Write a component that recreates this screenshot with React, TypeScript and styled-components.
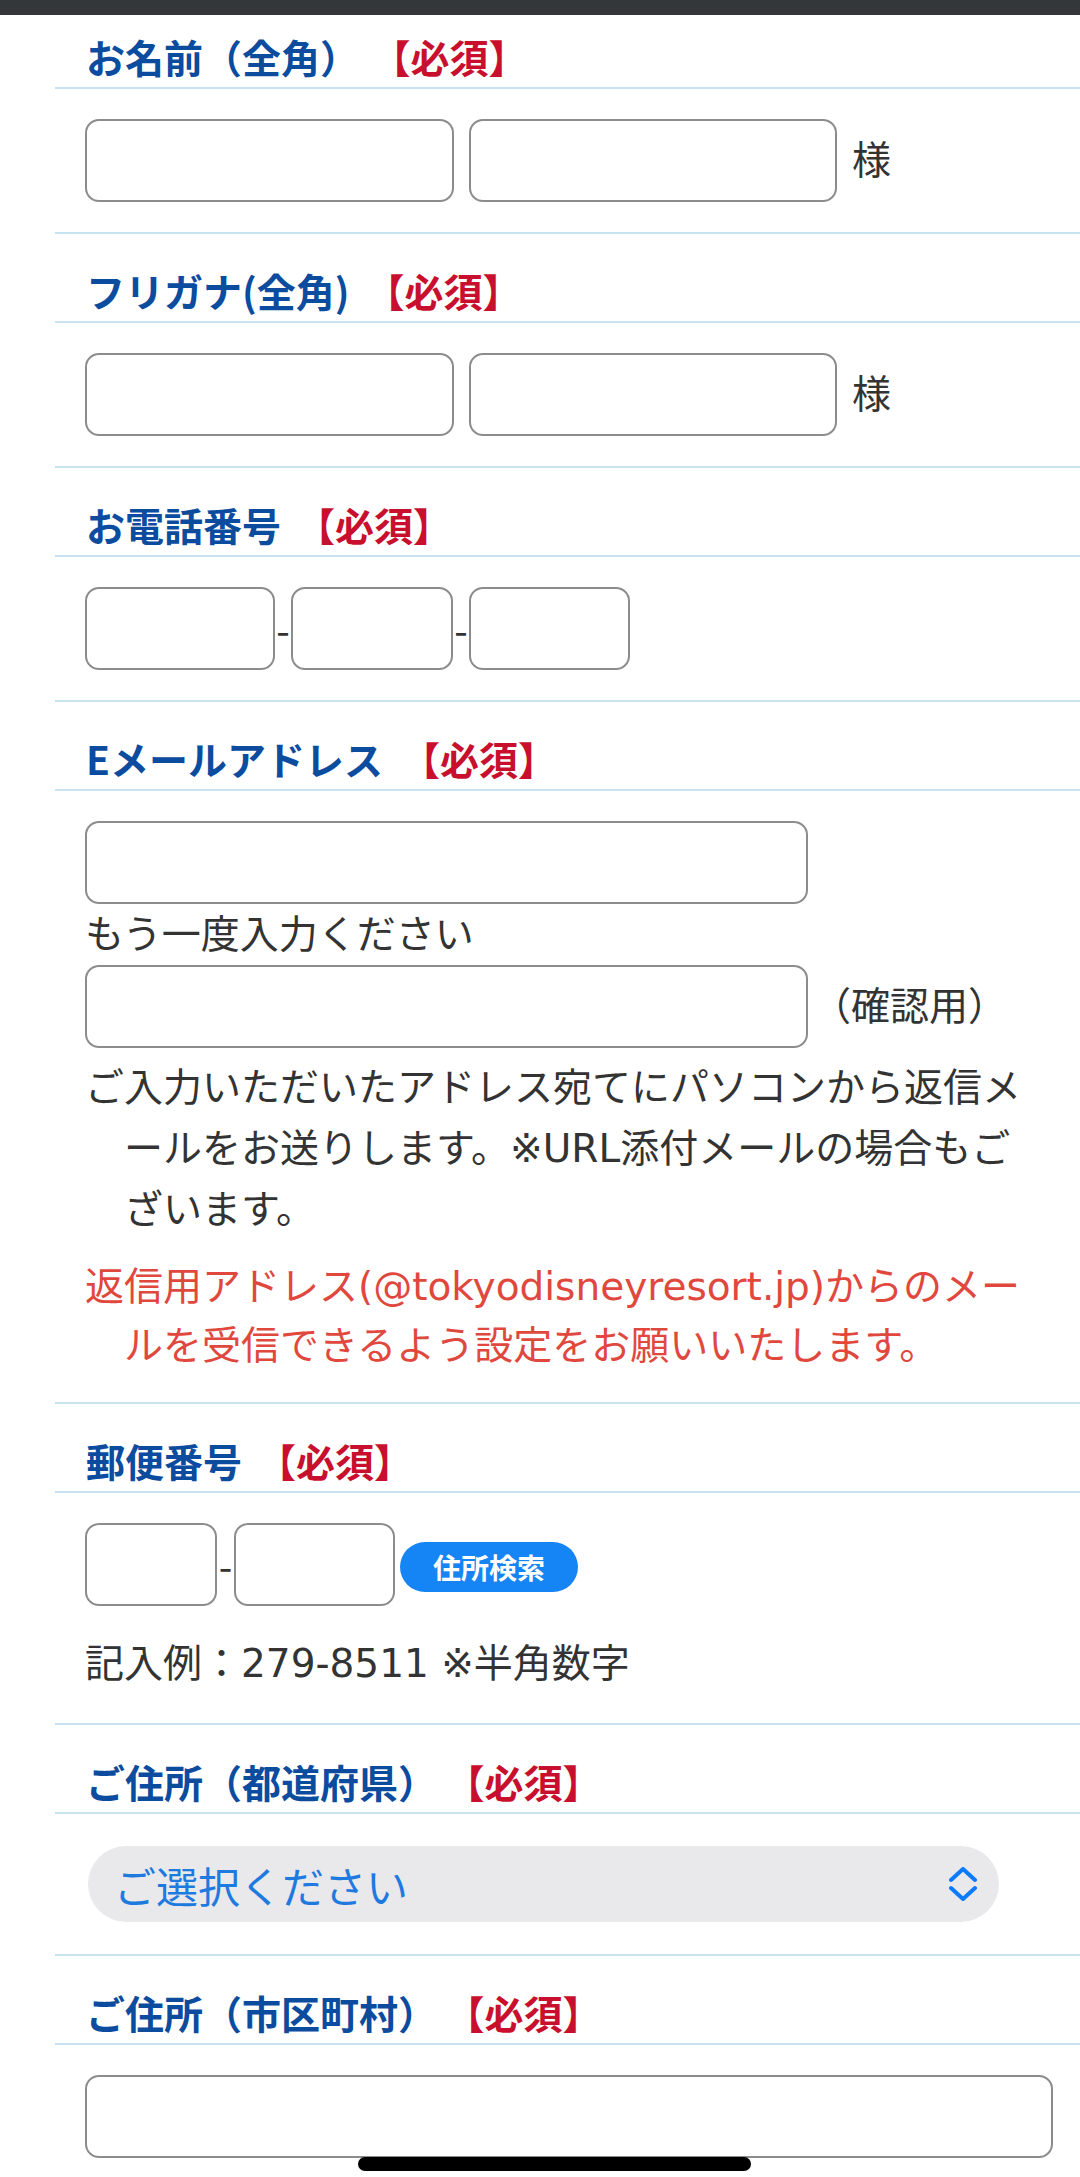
import styled, { createGlobalStyle } from 'styled-components'

const GlobalStyle = createGlobalStyle`
  html, body {
    margin: 0;
    padding: 0;
    background: #fff;
  }
  body {
    font-family: "DejaVu Sans", "Noto Sans CJK JP", sans-serif;
    color: #333;
  }
  * {
    box-sizing: border-box;
  }
`

const LINE = '#c7e3f1'

const TopBar = styled.div`
  position: fixed;
  top: 0;
  left: 0;
  right: 0;
  height: 15px;
  background: #343739;
  z-index: 2;
`

const HomeIndicator = styled.div`
  position: fixed;
  left: 358px;
  bottom: 6px;
  width: 393px;
  height: 14px;
  border-radius: 7px;
  background: #000;
  z-index: 2;
`

const Form = styled.form`
  padding-left: 55px;
  margin: 0;
`

const Field = styled.section`
  border-bottom: 2px solid ${LINE};
`

const FieldTitle = styled.h2`
  margin: 0;
  padding: 33px 0 8px 31px;
  font-family: "Noto Sans CJK JP", sans-serif;
  font-size: 39px;
  line-height: 46px;
  font-weight: 700;
  color: #0b4c9f;
  border-bottom: 2px solid ${LINE};
  white-space: nowrap;
`

const Required = styled.span<{ $gap: number }>`
  color: #c8102e;
  margin-left: ${p => p.$gap}px;
`

const Body = styled.div<{ $pt?: number; $pb?: number }>`
  padding: ${p => p.$pt ?? 30}px 0 ${p => p.$pb ?? 30}px 30px;
`

const Row = styled.div<{ $gap?: number }>`
  display: flex;
  align-items: center;
  gap: ${p => p.$gap ?? 0}px;
`

const TextBox = styled.input<{ $w: number }>`
  width: ${p => p.$w}px;
  height: 83px;
  margin: 0;
  padding: 0 16px;
  border: 2px solid #8c8c8c;
  border-radius: 14px;
  background: #fff;
  font-family: inherit;
  font-size: 39px;
  color: #333;
  outline: none;
  flex: none;
`

const Dash = styled.span<{ $w?: number }>`
  width: ${p => p.$w ?? 16}px;
  text-align: center;
  font-family: "Noto Sans CJK JP", sans-serif;
  font-size: 39px;
  line-height: 1;
  color: #333;
`

const Suffix = styled.span<{ $ml?: number }>`
  margin-left: ${p => p.$ml ?? 0}px;
  font-size: 39px;
  line-height: 1;
  color: #333;
  white-space: nowrap;
`

const Label = styled.div`
  font-size: 39px;
  line-height: 61px;
  color: #333;
`

const Note = styled.p<{ $red?: boolean; $mt: number; $lh: number }>`
  margin: ${p => p.$mt}px 0 0;
  padding-left: 39px;
  text-indent: -39px;
  font-size: 39px;
  line-height: ${p => p.$lh}px;
  color: ${p => (p.$red ? '#e0483e' : '#333')};
  white-space: nowrap;
`

const SearchButton = styled.button`
  margin: 4px 0 0 5px;
  width: 178px;
  height: 50px;
  padding: 0;
  border: none;
  border-radius: 25px;
  background: #1584f5;
  color: #fff;
  font-family: "Noto Sans CJK JP", sans-serif;
  font-size: 28px;
  font-weight: 700;
  line-height: 50px;
`

const Hint = styled.div`
  margin-top: 27px;
  font-size: 39px;
  line-height: 61px;
  color: #333;
`

const SelectBox = styled.button`
  display: flex;
  align-items: center;
  justify-content: space-between;
  margin-left: 3px;
  width: 911px;
  height: 76px;
  padding: 0 21px 0 26px;
  border: none;
  border-radius: 38px;
  background: #e9e9eb;
  color: #1f7ae0;
  font-family: "Noto Sans CJK JP", sans-serif;
  font-size: 42px;
  text-align: left;
`

const Chevrons = () => (
  <svg width="30" height="34" viewBox="0 0 30 34" fill="none" stroke="#0a7aff" strokeWidth="4" strokeLinecap="round" strokeLinejoin="round">
    <path d="M3 13 L15 2 L27 13" />
    <path d="M3 21 L15 32 L27 21" />
  </svg>
)

export default function App() {
  return (
    <>
      <GlobalStyle />
      <TopBar />
      <Form onSubmit={e => e.preventDefault()}>
        <Field>
          <FieldTitle>
            お名前（全角）<Required $gap={32}>【必須】</Required>
          </FieldTitle>
          <Body>
            <Row $gap={15}>
              <TextBox $w={369} />
              <TextBox $w={368} />
              <Suffix>様</Suffix>
            </Row>
          </Body>
        </Field>

        <Field>
          <FieldTitle>
            フリガナ(全角)<Required $gap={16}>【必須】</Required>
          </FieldTitle>
          <Body>
            <Row $gap={15}>
              <TextBox $w={369} />
              <TextBox $w={368} />
              <Suffix>様</Suffix>
            </Row>
          </Body>
        </Field>

        <Field>
          <FieldTitle>
            お電話番号<Required $gap={15}>【必須】</Required>
          </FieldTitle>
          <Body>
            <Row>
              <TextBox $w={190} />
              <Dash>-</Dash>
              <TextBox $w={162} />
              <Dash>-</Dash>
              <TextBox $w={161} />
            </Row>
          </Body>
        </Field>

        <Field>
          <FieldTitle>
            Eメールアドレス<Required $gap={18}>【必須】</Required>
          </FieldTitle>
          <Body $pb={27}>
            <TextBox $w={723} />
            <Label>もう一度入力ください</Label>
            <Row>
              <TextBox $w={723} />
              <Suffix $ml={4}>（確認用）</Suffix>
            </Row>
            <Note $mt={9} $lh={61}>
              ご入力いただいたアドレス宛てにパソコンから返信メ
              <br />
              ールをお送りします。※URL添付メールの場合もご
              <br />
              ざいます。
            </Note>
            <Note $red $mt={17} $lh={59}>
              返信用アドレス(@tokyodisneyresort.jp)からのメー
              <br />
              ルを受信できるよう設定をお願いいたします。
            </Note>
          </Body>
        </Field>

        <Field>
          <FieldTitle>
            郵便番号<Required $gap={15}>【必須】</Required>
          </FieldTitle>
          <Body $pb={29}>
            <Row>
              <TextBox $w={132} />
              <Dash $w={17}>-</Dash>
              <TextBox $w={161} />
              <SearchButton type="button">住所検索</SearchButton>
            </Row>
            <Hint>記入例：279-8511 ※半角数字</Hint>
          </Body>
        </Field>

        <Field>
          <FieldTitle>
            ご住所（都道府県）<Required $gap={28}>【必須】</Required>
          </FieldTitle>
          <Body $pt={32} $pb={32}>
            <SelectBox type="button">
              <span>ご選択ください</span>
              <Chevrons />
            </SelectBox>
          </Body>
        </Field>

        <Field>
          <FieldTitle>
            ご住所（市区町村）<Required $gap={28}>【必須】</Required>
          </FieldTitle>
          <Body>
            <TextBox $w={968} />
          </Body>
        </Field>
      </Form>
      <HomeIndicator />
    </>
  )
}
